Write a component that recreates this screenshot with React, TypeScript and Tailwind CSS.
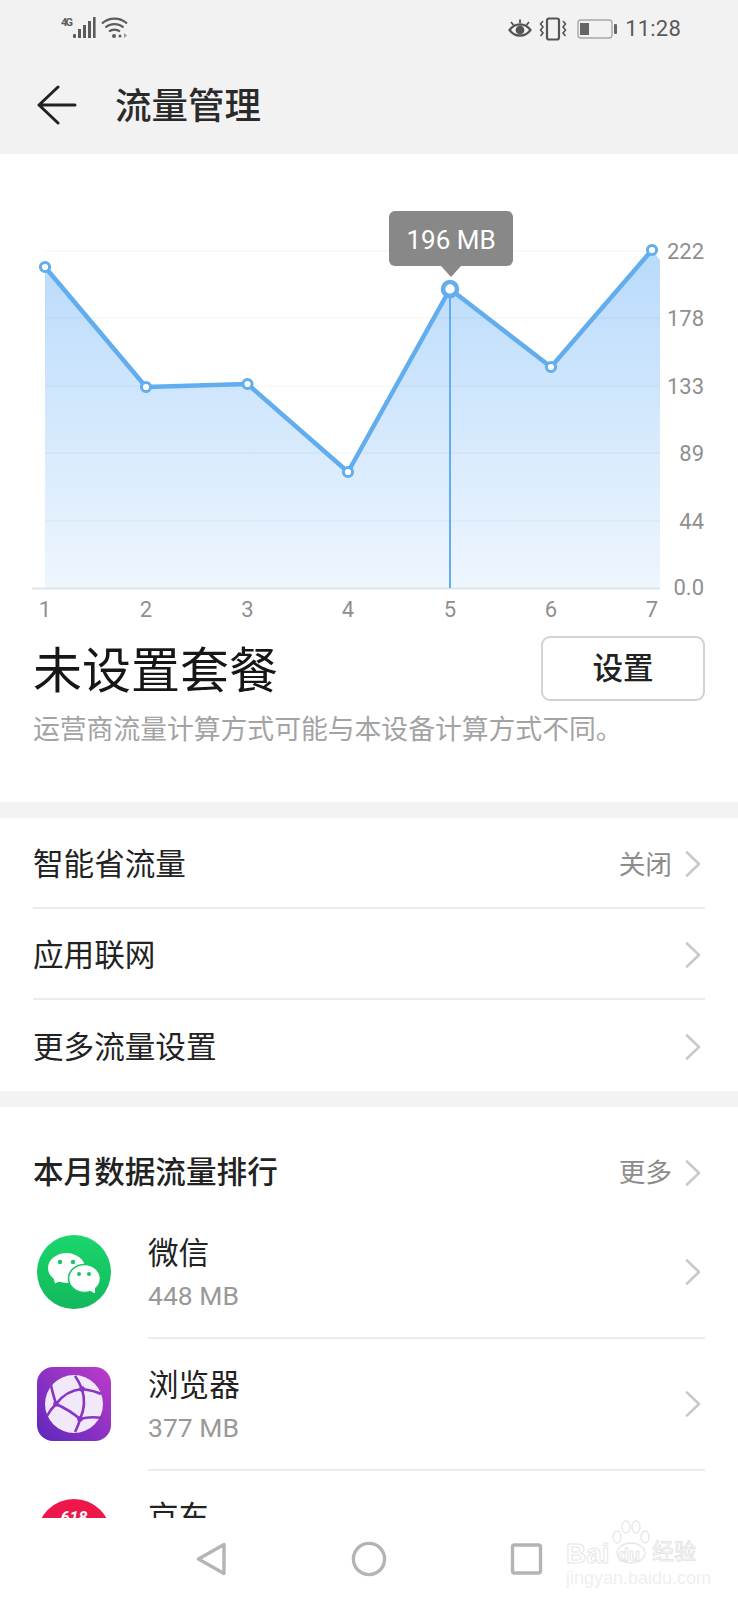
const POINTS = [
  [45, 267],
  [146, 387],
  [247.5, 384],
  [348, 472],
  [450, 289],
  [551, 367],
  [652, 250],
];
const GRID_ROWS = [
  { y: 251, label: '222' },
  { y: 318, label: '178' },
  { y: 386, label: '133' },
  { y: 453, label: '89' },
  { y: 521, label: '44' },
];
const LINE = '#62adee';

function Chevron() {
  return (
    <svg width="16" height="26" viewBox="0 0 16 26" fill="none" className="shrink-0">
      <path d="M2 1.5 14 13 2 24.5" stroke="#c9c9c9" strokeWidth="2.6" strokeLinecap="round" strokeLinejoin="round" />
    </svg>
  );
}

function StatusBar() {
  return (
    <div className="h-[56px] flex items-start justify-between pl-[61px] pr-[57px] text-[#555]">
      <div className="flex items-start pt-[15px]">
        <svg width="68" height="26" viewBox="0 0 68 26" fill="#5c5c5c">
          <text x="0" y="11" fontSize="11" fontWeight="700" fontFamily="Roboto, sans-serif" textLength="12">4G</text>
          <rect x="12" y="19" width="3" height="4" rx="1" />
          <rect x="17" y="14" width="3" height="9" />
          <rect x="22" y="10" width="3" height="13" />
          <rect x="27" y="6" width="3" height="17" />
          <rect x="32" y="2" width="2.6" height="21" />
          <path d="M41 8.5C48 2 59 2 66 8.5" fill="none" stroke="#5c5c5c" strokeWidth="2.2" />
          <path d="M44.5 12.5C49.5 8 57.5 8 62.5 12.5" fill="none" stroke="#5c5c5c" strokeWidth="2.2" />
          <path d="M48 16.5C51 14 56 14 59 16.5" fill="none" stroke="#5c5c5c" strokeWidth="2.2" />
          <circle cx="53" cy="21" r="2" />
          <circle cx="59" cy="21" r="1.5" />
          <path d="M63 18v5l3-2.5z" fill="#999" />
        </svg>
      </div>
      <div className="flex items-center pt-[16px] gap-[7px]">
        <svg width="24" height="20" viewBox="0 0 24 20" fill="none" stroke="#555" strokeWidth="2.2">
          <path d="M1.5 11C7 3.5 17 3.5 22.5 11 17 18.5 7 18.5 1.5 11Z" />
          <circle cx="12" cy="11" r="4.4" fill="#555" stroke="none" />
          <path d="M3 3l2.5 3M12 0.5V4M21 3l-2.5 3" strokeWidth="1.8" />
        </svg>
        <svg width="28" height="24" viewBox="0 0 28 24" fill="none" stroke="#555">
          <rect x="8" y="1.5" width="12" height="21" rx="2" strokeWidth="2.2" />
          <path d="M4 4 1.5 7 4 10 1.5 13 4 16 1.5 19M24 4l2.5 3L24 10l2.5 3L24 16l2.5 3" strokeWidth="1.6" />
        </svg>
        <svg width="40" height="20" viewBox="0 0 40 20" className="ml-[3px] mr-[1px]">
          <rect x="1" y="1" width="34" height="18" rx="3" fill="none" stroke="#a8a8a8" strokeWidth="1.4" />
          <rect x="3" y="4" width="9" height="12" fill="#666" />
          <rect x="37" y="5" width="3" height="10" rx="1" fill="#666" />
        </svg>
        <span className="font-['Roboto',sans-serif] text-[22px] leading-[26px] tracking-[0.2px] text-[#5a5a5a]">11:28</span>
      </div>
    </div>
  );
}

function TitleBar() {
  return (
    <div className="h-[98px] flex items-start pl-[37px] pt-[29px]">
      <svg width="40" height="40" viewBox="0 0 40 40" fill="none" stroke="#222" strokeWidth="3" strokeLinecap="round" strokeLinejoin="round" className="shrink-0">
        <path d="M21 2 2 20l19 18M2 20h36" />
      </svg>
      <h1 className="ml-[38px] pt-[2px] text-[36.5px] leading-[40px] font-medium text-[#2a2a2a]">流量管理</h1>
    </div>
  );
}

function TrafficChart() {
  const linePath = POINTS.map(([x, y]) => `${x},${y}`).join(' ');
  const areaPath = `${linePath} 660,260 660,588 45,588`;

  return (
    <svg width="738" height="476" viewBox="0 154 738 476" className="block" fontFamily="Roboto, sans-serif">
      <defs>
        <linearGradient id="area-fill" x1="0" y1="249" x2="0" y2="588" gradientUnits="userSpaceOnUse">
          <stop offset="0" stopColor="#b8dafb" />
          <stop offset="1" stopColor="#eef6fe" />
        </linearGradient>
      </defs>

      <polygon points={areaPath} fill="url(#area-fill)" />
      {GRID_ROWS.map((row) => (
        <line key={row.y} x1="45" x2="660" y1={row.y} y2={row.y} stroke="#000" strokeOpacity="0.035" strokeWidth="1.5" />
      ))}
      <line x1="32" x2="660" y1="588.5" y2="588.5" stroke="#dde4ec" strokeWidth="2" />
      <line x1="450" x2="450" y1="289" y2="588" stroke={LINE} strokeWidth="2" />
      <polyline points={linePath} fill="none" stroke={LINE} strokeWidth="4.5" strokeLinejoin="round" />

      {POINTS.map(([x, y], i) =>
        i === 4 ? (
          <circle key={x} cx={x} cy={y} r="7" fill="#fff" stroke={LINE} strokeWidth="4.5" />
        ) : (
          <circle key={x} cx={x} cy={y} r="4.6" fill="#fff" stroke={LINE} strokeWidth="3" />
        ),
      )}

      {/* value bubble over the selected day */}
      <rect x="389" y="211" width="124" height="55" rx="6" fill="#888" />
      <path d="M441 266h20l-10 11z" fill="#888" />
      <text x="451" y="249" textAnchor="middle" fontSize="26" fill="#fff">196 MB</text>

      {GRID_ROWS.map((row) => (
        <text key={row.label} x="704" y={row.y + 8} textAnchor="end" fontSize="22" fill="#8f8f8f">
          {row.label}
        </text>
      ))}
      <text x="704" y="595" textAnchor="end" fontSize="22" fill="#8f8f8f">0.0</text>
      {POINTS.map(([x], i) => (
        <text key={x} x={x} y="617" textAnchor="middle" fontSize="22" fill="#8f8f8f">
          {i + 1}
        </text>
      ))}
    </svg>
  );
}

function PlanBlock() {
  return (
    <div className="px-[33px] pt-[6px] pb-[54px]">
      <div className="flex items-center justify-between">
        <div className="pt-[7px] text-[49px] leading-[58px] text-[#161616]">未设置套餐</div>
        <button className="w-[164px] h-[65px] border-2 border-[#d2d2d2] rounded-[9px] text-[30.6px] font-medium text-[#222]">
          设置
        </button>
      </div>
      <p className="mt-[11px] text-[26.8px] leading-[36px] text-[#a3a3a3]">运营商流量计算方式可能与本设备计算方式不同。</p>
    </div>
  );
}

function SettingRow({ label, value, last }: { label: string; value?: string; last?: boolean }) {
  return (
    <div className={`h-[91px] flex items-center justify-between pr-[4px] ${last ? '' : 'border-b-2 border-[#ececec]'}`}>
      <span className="pt-[5px] text-[30.6px] text-[#222]">{label}</span>
      <div className="flex items-center gap-[13px]">
        {value && <span className="pt-[5px] text-[26.7px] text-[#8c8c8c]">{value}</span>}
        <div className="pt-[3px]">
          <Chevron />
        </div>
      </div>
    </div>
  );
}

function WeChatIcon() {
  return (
    <svg width="74" height="74" viewBox="0 0 74 74" className="shrink-0">
      <defs>
        <linearGradient id="wx-bg" x1="0" y1="0" x2="0" y2="1">
          <stop offset="0" stopColor="#1bd66c" />
          <stop offset="1" stopColor="#12b85c" />
        </linearGradient>
      </defs>
      <circle cx="37" cy="37" r="37" fill="url(#wx-bg)" />
      <ellipse cx="29.5" cy="33" rx="18.5" ry="15" fill="#fff" />
      <path d="M16 41l2 7.5 8-4z" fill="#fff" />
      <ellipse cx="47.5" cy="43.5" rx="16" ry="14" fill="#fff" stroke="#17c765" strokeWidth="1.6" />
      <path d="M52 55l6 3.5v-7z" fill="#fff" />
      <circle cx="23" cy="27" r="2.2" fill="#17c765" />
      <circle cx="36" cy="27" r="2.2" fill="#17c765" />
      <circle cx="42" cy="39" r="2" fill="#17c765" />
      <circle cx="52" cy="39" r="2" fill="#17c765" />
    </svg>
  );
}

function BrowserIcon() {
  return (
    <svg width="74" height="74" viewBox="0 0 74 74" className="shrink-0">
      <defs>
        <linearGradient id="br-bg" x1="1" y1="0" x2="0" y2="1">
          <stop offset="0" stopColor="#bd3cc8" />
          <stop offset="1" stopColor="#5e27bd" />
        </linearGradient>
      </defs>
      <rect width="74" height="74" rx="16" fill="url(#br-bg)" />
      <circle cx="37" cy="37" r="29" fill="#f1e9f9" />
      <g fill="none" stroke="#8a34c4" strokeWidth="2.6">
        <path d="M45 22C43 17 41 13 38 9" />
        <path d="M45 22C34 23 25 29 19 37" />
        <path d="M45 22C48 32 48 42 43 52" />
        <path d="M19 37C28 41 36 46 43 52" />
        <path d="M43 52C42 57 40 61 38 65" />
        <path d="M43 52C50 50 58 50 65 51" />
        <path d="M45 22C52 23 58 24 64 27" />
        <path d="M19 37C17 30 15 24 14 18" />
        <path d="M19 37C15 41 12 45 10 49" />
      </g>
      <circle cx="45" cy="22" r="2.8" fill="#8a34c4" />
      <circle cx="19" cy="37" r="2.8" fill="#8a34c4" />
      <circle cx="43" cy="52" r="2.8" fill="#8a34c4" />
    </svg>
  );
}

function ShopIcon() {
  return (
    <svg width="74" height="74" viewBox="0 0 74 74" className="shrink-0">
      <defs>
        <linearGradient id="jd-bg" x1="0" y1="0" x2="1" y2="0">
          <stop offset="0" stopColor="#f0144e" />
          <stop offset="1" stopColor="#ea1a45" />
        </linearGradient>
      </defs>
      <circle cx="37" cy="37" r="37" fill="url(#jd-bg)" />
      <text x="37" y="24" textAnchor="middle" fontSize="16" fontWeight="700" fontStyle="italic" fontFamily="Roboto, sans-serif" fill="#fff">618</text>
    </svg>
  );
}

function AppRow({ icon, name, size }: { icon: React.ReactNode; name: string; size?: string }) {
  return (
    <div className="flex pl-[37px] pr-[33px]">
      <div className="pt-[28px]">{icon}</div>
      <div className="ml-[37px] flex-1 h-[132px] flex items-start justify-between pr-[4px] border-b-2 border-[#ececec]">
        <div className="pt-[27px]">
          <div className="text-[30.6px] leading-[40px] text-[#222]">{name}</div>
          {size && <div className="mt-[4px] text-[26.5px] leading-[36px] text-[#999]">{size}</div>}
        </div>
        <div className="pt-[52px]">
          <Chevron />
        </div>
      </div>
    </div>
  );
}

function NavBar() {
  return (
    <div className="h-[82px] shrink-0 bg-white flex items-start">
      <svg width="738" height="82" viewBox="0 1518 738 82" fill="none" stroke="#b4b4b4" strokeWidth="3.4" strokeLinejoin="round">
        <path d="M224 1544.5v29L198.5 1559z" />
        <circle cx="369" cy="1559" r="15.6" />
        <rect x="512.5" y="1545" width="28" height="28" rx="2" />
      </svg>
    </div>
  );
}

function SiteMark() {
  return (
    <div className="absolute left-[566px] top-[1520px] w-[134px] h-[68px]">
      <svg width="46" height="46" viewBox="0 0 46 46" fill="none" stroke="#e6e6e6" strokeWidth="1.3" className="absolute left-[42px] top-0">
        <ellipse cx="9" cy="17" rx="4" ry="6" />
        <ellipse cx="18" cy="7" rx="4" ry="6" />
        <ellipse cx="28" cy="7" rx="4" ry="6" />
        <ellipse cx="37" cy="17" rx="4" ry="6" />
        <ellipse cx="23" cy="33" rx="14" ry="10" />
      </svg>
      <div className="absolute left-0 top-[18px] whitespace-nowrap font-['Liberation_Sans',sans-serif] text-[28px] leading-[32px] font-bold text-transparent [-webkit-text-stroke:1px_#e6e6e6]">
        Bai
      </div>
      <div className="absolute left-[52px] top-[24px] whitespace-nowrap font-['Liberation_Sans',sans-serif] text-[18px] leading-[22px] font-bold text-transparent [-webkit-text-stroke:1px_#e6e6e6]">
        du
      </div>
      <div className="absolute left-[86px] top-[17px] whitespace-nowrap text-[22px] leading-[30px] text-transparent [-webkit-text-stroke:1px_#e6e6e6]">
        经验
      </div>
      <div className="absolute left-0 top-[49px] whitespace-nowrap font-['Liberation_Sans',sans-serif] text-[18px] leading-[18px] text-[#efefef]">
        jingyan.baidu.com
      </div>
    </div>
  );
}

export default function App() {
  return (
    <div className="relative w-[738px] h-[1600px] overflow-hidden bg-white flex flex-col font-['Roboto','Noto_Sans_CJK_SC',sans-serif]">
      <div className="shrink-0 bg-[#f2f2f2]">
        <StatusBar />
        <TitleBar />
      </div>

      <main className="flex-1 min-h-0 overflow-hidden">
        <TrafficChart />
        <PlanBlock />
        <div className="h-[16px] bg-[#f3f3f3]" />
        <div className="pl-[33px] pr-[33px]">
          <SettingRow label="智能省流量" value="关闭" />
          <SettingRow label="应用联网" />
          <SettingRow label="更多流量设置" last />
        </div>
        <div className="h-[16px] bg-[#f3f3f3]" />
        <div className="pl-[33px] pr-[37px] pt-[46px] pb-[14px] flex items-center justify-between h-[100px]">
          <h2 className="text-[30.6px] leading-[40px] font-medium text-[#222]">本月数据流量排行</h2>
          <div className="flex items-center gap-[13px]">
            <span className="text-[26.7px] leading-[36px] text-[#8c8c8c]">更多</span>
            <Chevron />
          </div>
        </div>
        <AppRow icon={<WeChatIcon />} name="微信" size="448 MB" />
        <AppRow icon={<BrowserIcon />} name="浏览器" size="377 MB" />
        <AppRow icon={<ShopIcon />} name="京东" />
      </main>

      <NavBar />
      <SiteMark />
    </div>
  );
}
